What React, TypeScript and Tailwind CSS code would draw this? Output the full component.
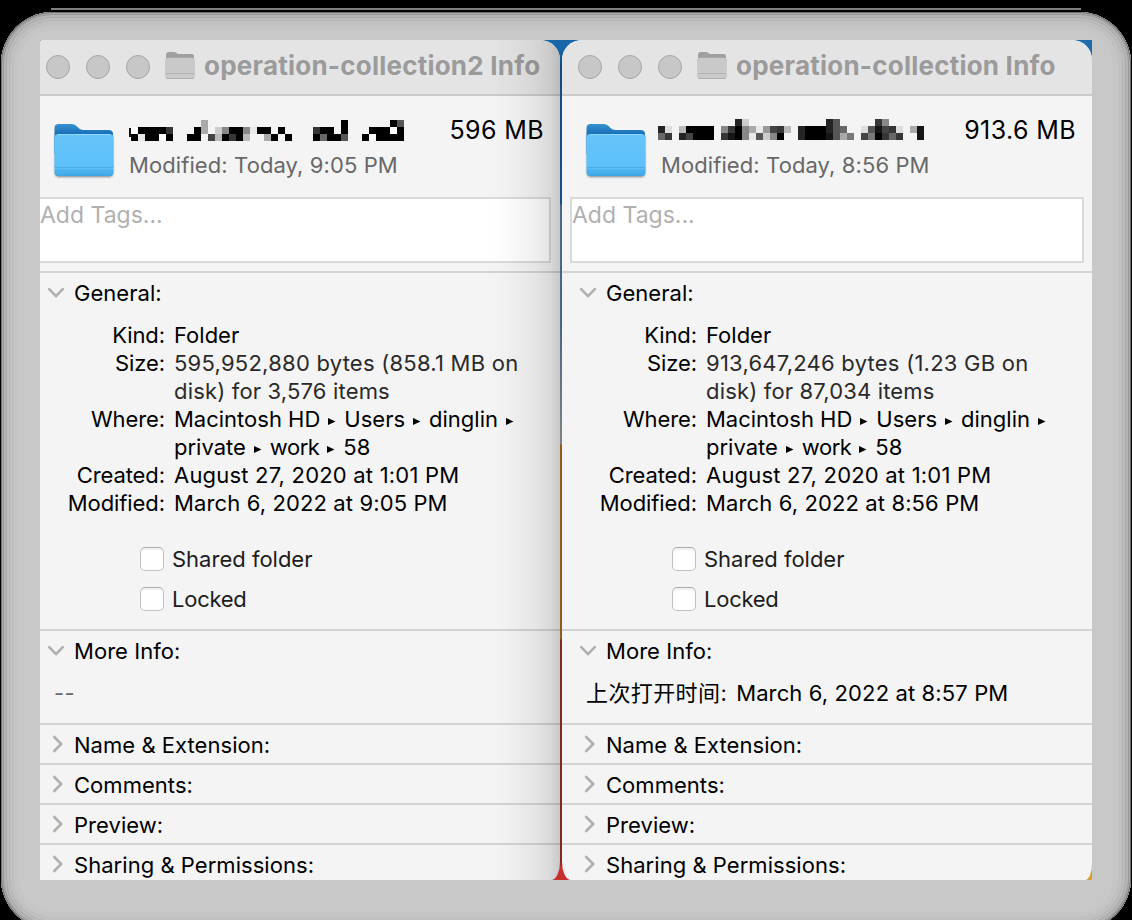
import type { ReactNode } from "react";

const SHADES: Record<string, string> = {
  "0": "#000000", "1": "#151515", "2": "#242424", "3": "#363636", "4": "#444444", "5": "#565656",
  "6": "#686868", "7": "#787878", "8": "#888888", "9": "#999999", a: "#aaaaaa", b: "#bababa",
  c: "#cccccc", d: "#dddddd", e: "#e9e9e9", f: "#ffffff",
};

/* Each row lists one shade per cell; a dot leaves the cell empty. */
const LEFT_NAME = [
  "..........a...................0......05",
  "f00003...0a.c8008e00.0....300.0...000f0",
  "0e00f0..00.4b030b..a0.0...06005..0f0000",
];
const RIGHT_NAME = [
  "...........2c...........25.....38.....",
  "2d.b0000.8308ae943b.2000256..d5143d.a1",
  "63.24000.3108e5c80..200015a7.470363..1",
];

function Mosaic({ rows, x = 0 }: { rows: string[]; x?: number }) {
  return (
    <svg width="280" height="21" viewBox="0 0 280 21" shapeRendering="crispEdges" className="block shrink-0">
      {rows.map((row, r) =>
        row.split("").map((c, i) =>
          SHADES[c] ? <rect key={`${r}-${i}`} x={x + i * 7} y={r * 7} width="7" height="7" fill={SHADES[c]} /> : null,
        ),
      )}
      {x > 0 && <path d="M2 8H0v9h2z" fill="#111" />}
    </svg>
  );
}

function SmallFolder() {
  return (
    <svg width="32" height="30" viewBox="0 0 32 30" className="block">
      <path d="M2 4Q2 1 4.500 1H10q1.500 0 2.500 1t2.500 1h13q2 0 2 2v20H2z" fill="#a0a0a0" />
      <rect x="1.500" y="6.500" width="29" height="21.500" rx="2" fill="#b0b0b0" />
      <rect x="2" y="7" width="28" height="20" rx="1.500" fill="#c9c9c9" />
      <path d="M2 22.500h28" stroke="#b4b4b4" strokeWidth="1" />
    </svg>
  );
}

function BigFolder() {
  return (
    <svg width="64" height="58" viewBox="0 0 64 58" className="block">
      <defs>
        <linearGradient id="tab" x1="0" y1="0" x2="0" y2="1">
          <stop offset="0" stopColor="#3794d2" />
          <stop offset="0.300" stopColor="#1b72b8" />
          <stop offset="1" stopColor="#1b72b8" />
        </linearGradient>
        <linearGradient id="face" x1="0" y1="0" x2="0" y2="1">
          <stop offset="0" stopColor="#67c4f8" />
          <stop offset="0.800" stopColor="#5cc0fa" />
          <stop offset="1" stopColor="#3da5e4" />
        </linearGradient>
        <filter id="soft" x="-10%" y="-10%" width="120%" height="125%">
          <feGaussianBlur stdDeviation="1" />
        </filter>
      </defs>
      <rect x="3" y="12" width="58" height="43" rx="4" fill="#46525c" opacity="0.700" filter="url(#soft)" />
      <path d="M2.500 6Q2.500 2 6.500 2h13q3 0 5 2l2 2q2 2 5 2h25q4.500 0 4.500 4v20h-58.500z" fill="url(#tab)" />
      <rect x="2.500" y="12" width="59" height="42" rx="4" fill="url(#face)" />
      <path d="M6 12.500h52" stroke="#91d8ff" strokeWidth="1" />
      <path d="M3 45.500h58M3 48.500h58" stroke="#4cabe6" strokeWidth="1" />
    </svg>
  );
}

function ChevronDown() {
  return (
    <svg width="18" height="12" viewBox="0 0 18 12" fill="none" className="block">
      <path d="M2.200 2.200L9 9.200l6.800-7" stroke="#b0b0b0" strokeWidth="2.600" strokeLinecap="round" strokeLinejoin="round" />
    </svg>
  );
}

function ChevronRight() {
  return (
    <svg width="12" height="18" viewBox="0 0 12 18" fill="none" className="block">
      <path d="M2.200 2L9.200 9l-7 7" stroke="#b0b0b0" strokeWidth="2.600" strokeLinecap="round" strokeLinejoin="round" />
    </svg>
  );
}

function SectionTitle({ open = false, children }: { open?: boolean; children: ReactNode }) {
  return (
    <div className="flex h-10 items-center">
      <div className="flex w-[34px] shrink-0 justify-start pl-[7px]">
        {open ? <ChevronDown /> : <span className="pb-0.5 pl-[5px]"><ChevronRight /></span>}
      </div>
      <span className="whitespace-nowrap pt-px tracking-[0.04px]">{children}</span>
    </div>
  );
}

function Row({ label, children }: { label: string; children: ReactNode }) {
  return (
    <div className="flex items-start leading-[28px]">
      <div className="w-[125px] shrink-0 text-right tracking-[-0.08px]">{label}</div>
      <div className="pl-[9px] whitespace-nowrap">{children}</div>
    </div>
  );
}

function Arrow() {
  return (
    <svg width="24" height="10" viewBox="0 0 24 10" className="inline-block align-middle">
      <path d="M8 2l7.500 3.500L8 9z" fill="#000" />
    </svg>
  );
}

function Check({ children }: { children: ReactNode }) {
  return (
    <div className="flex h-10 items-center gap-2 text-[#1c1c1c]">
      <span className="h-6 w-6 shrink-0 rounded-[5px] border border-[#c2c2c2] border-t-[#adadad] bg-white shadow-[inset_0_2px_2px_rgba(0,0,0,0.07)]" />
      <span className="whitespace-nowrap">{children}</span>
    </div>
  );
}

interface InfoProps {
  title: string;
  name: ReactNode;
  total: string;
  today: string;
  size: [string, string];
  modified: string;
  more: ReactNode;
  inset: string;
  tagClass: string;
  shape: string;
}

function InfoWindow({ title, name, total, today, size, modified, more, inset, tagClass, shape }: InfoProps) {
  return (
    <section className={`relative h-[840px] shrink-0 overflow-hidden bg-[#f4f4f4] ${shape}`}>
      <header className={`h-14 border-b-2 border-[#cbcbcb] bg-[#e4e4e4] ${inset}`}>
        <div className="flex h-full items-center pl-1.5">
          <div className="flex gap-4">
            <span className="h-6 w-6 rounded-full border border-[#a6a6a6] bg-[#c7c7c7]" />
            <span className="h-6 w-6 rounded-full border border-[#a6a6a6] bg-[#c7c7c7]" />
            <span className="h-6 w-6 rounded-full border border-[#a6a6a6] bg-[#c7c7c7]" />
          </div>
          <div className="pl-3.5 pb-0.5"><SmallFolder /></div>
          <h1 className="whitespace-nowrap pb-[3px] pl-2 text-[26px] leading-[30px] font-bold tracking-[0.22px] text-[#9b9b9b]">{title}</h1>
        </div>
      </header>
      <div className={`flex h-[101px] ${inset}`}>
        <div className="pl-3 pt-[26px]"><BigFolder /></div>
        <div className="flex-1 pt-[26px]">
          <div className="flex items-start justify-between pr-4">
            {name}
            <span className="-mt-1.5 whitespace-nowrap text-[25px] leading-[28px] tracking-[0.4px] text-black">{total}</span>
          </div>
          <div className="whitespace-nowrap pl-[13px] pt-[7px] leading-[28px] tracking-[0.09px] text-[#686868]">{today}</div>
        </div>
      </div>
      <div className={`h-[66px] border-2 border-[#dadada] bg-white text-[23px] leading-[32px] text-[#b0b0b0] ${tagClass}`}>
        Add Tags...
      </div>
      <div className={`mt-2 h-[358px] border-t-2 border-[#d3d3d3] ${inset}`}>
        <SectionTitle open>General:</SectionTitle>
        <div className="pt-2">
          <Row label="Kind:">Folder</Row>
          <Row label="Size:">
            <div className="tracking-[0.24px] text-[#2a2a2a]">{size[0]}</div>
            <div className="tracking-[0.17px] text-[#2a2a2a]">{size[1]}</div>
          </Row>
          <Row label="Where:">
            <div>Macintosh HD<Arrow />Users<Arrow />dinglin<Arrow /></div>
            <div>private<Arrow /><span className="tracking-[-0.5px]">work</span><Arrow />58</div>
          </Row>
          <Row label="Created:"><span className="tracking-[0.2px]">August 27, 2020 at 1:01 PM</span></Row>
          <Row label="Modified:"><span className="tracking-[0.12px]">{modified}</span></Row>
        </div>
        <div className="pl-[100px] pt-[22px]">
          <Check>Shared folder</Check>
          <Check><span className="tracking-[-0.25px]">Locked</span></Check>
        </div>
      </div>
      <div className={`h-[94px] border-t-2 border-[#d3d3d3] ${inset}`}>
        <SectionTitle open>More Info:</SectionTitle>
        {more}
      </div>
      <div className={`h-10 border-t-2 border-[#d3d3d3] ${inset}`}><SectionTitle>Name &amp; Extension:</SectionTitle></div>
      <div className={`h-10 border-t-2 border-[#d3d3d3] ${inset}`}><SectionTitle>Comments:</SectionTitle></div>
      <div className={`h-10 border-t-2 border-[#d3d3d3] ${inset}`}><SectionTitle>Preview:</SectionTitle></div>
      <div className={`h-10 border-t-2 border-[#d3d3d3] ${inset}`}><SectionTitle>Sharing &amp; Permissions:</SectionTitle></div>
    </section>
  );
}

export default function App() {
  return (
    <div className="h-[920px] w-[1132px] overflow-hidden bg-black px-px pt-2 font-['Inter','Noto_Sans_CJK_SC',sans-serif] text-[22px] text-black">
      <div className="mx-[50px] mb-0.5 h-0.5 bg-[#808080]" />
      <div className="h-[918px] rounded-[52px] bg-[#c8c8c8] px-[39px] pt-[28px] shadow-[inset_0_0_0_1px_#707070,inset_0_0_0_2px_#a8a8a8,inset_0_0_0_3px_#989898,inset_0_0_0_5px_#b4b4b4,inset_0_0_0_6px_#aaaaaa,inset_0_0_0_8px_#bcbcbc,inset_0_0_0_9px_#b5b5b5,inset_0_0_0_13px_#c0c0c0,inset_0_0_0_18px_#c5c5c5]">
        <div className="flex h-[840px] w-[1052px] gap-0.5 bg-[linear-gradient(to_bottom,#1767a8_0,#1767a8_10px,#104c82_24px,#164f83_164px,#4b6790_165px,#496584_280px,#7d8283_404px,#8f5b20_405px,#8f5b20_599px,#842724_600px,#842724_822px,#c72f2c_828px)]">
          <div className="relative w-[520px]">
            <InfoWindow
              title="operation-collection2 Info"
              inset="pl-0"
              tagClass="mr-[9px] border-l-0"
              shape="w-[520px] rounded-tr-[20px] rounded-tl-[2px] [border-bottom-right-radius:9px_18px]"
              name={<div className="-mt-[2px] w-[280px] pl-[13px]"><Mosaic rows={LEFT_NAME} x={2} /></div>}
              total="596 MB"
              today="Modified: Today, 9:05 PM"
              size={["595,952,880 bytes (858.1 MB on", "disk) for 3,576 items"]}
              modified="March 6, 2022 at 9:05 PM"
              more={<div className="pl-3.5 pt-1 leading-[36px] tracking-[0.5px] text-[#6a6a6a]">--</div>}
            />
            {/* Shadow that the front window casts on this one */}
            <div className="pointer-events-none absolute inset-y-0 right-0 w-[70px] rounded-tr-[20px] bg-[linear-gradient(to_right,transparent,rgba(0,0,0,0.02)_20px,rgba(0,0,0,0.06)_44px,rgba(0,0,0,0.11)_60px,rgba(0,0,0,0.18))] [border-bottom-right-radius:9px_18px]" />
          </div>
          <div className="relative w-[530px] bg-[linear-gradient(to_right,transparent_500px,#1f6cad_500px)]">
            <div className="absolute bottom-0 right-0 h-5 w-2.5 bg-[#d9a02e]" />
            <InfoWindow
              title="operation-collection Info"
              inset="pl-2.5"
              tagClass="ml-2 mr-2"
              shape="w-[530px] rounded-t-[20px] [border-bottom-left-radius:9px_18px] [border-bottom-right-radius:7px_16px]"
              name={<div className="-mt-[3px] w-[280px] pl-[10px]"><Mosaic rows={RIGHT_NAME} /></div>}
              total="913.6 MB"
              today="Modified: Today, 8:56 PM"
              size={["913,647,246 bytes (1.23 GB on", "disk) for 87,034 items"]}
              modified="March 6, 2022 at 8:56 PM"
              more={
                <div className="flex gap-[9px] whitespace-nowrap pl-3.5 pt-1 leading-[36px]">
                  <span className="tracking-[0.4px]">上次打开时间:</span>
                  <span className="tracking-[0.12px]">March 6, 2022 at 8:57 PM</span>
                </div>
              }
            />
          </div>
        </div>
      </div>
    </div>
  );
}
